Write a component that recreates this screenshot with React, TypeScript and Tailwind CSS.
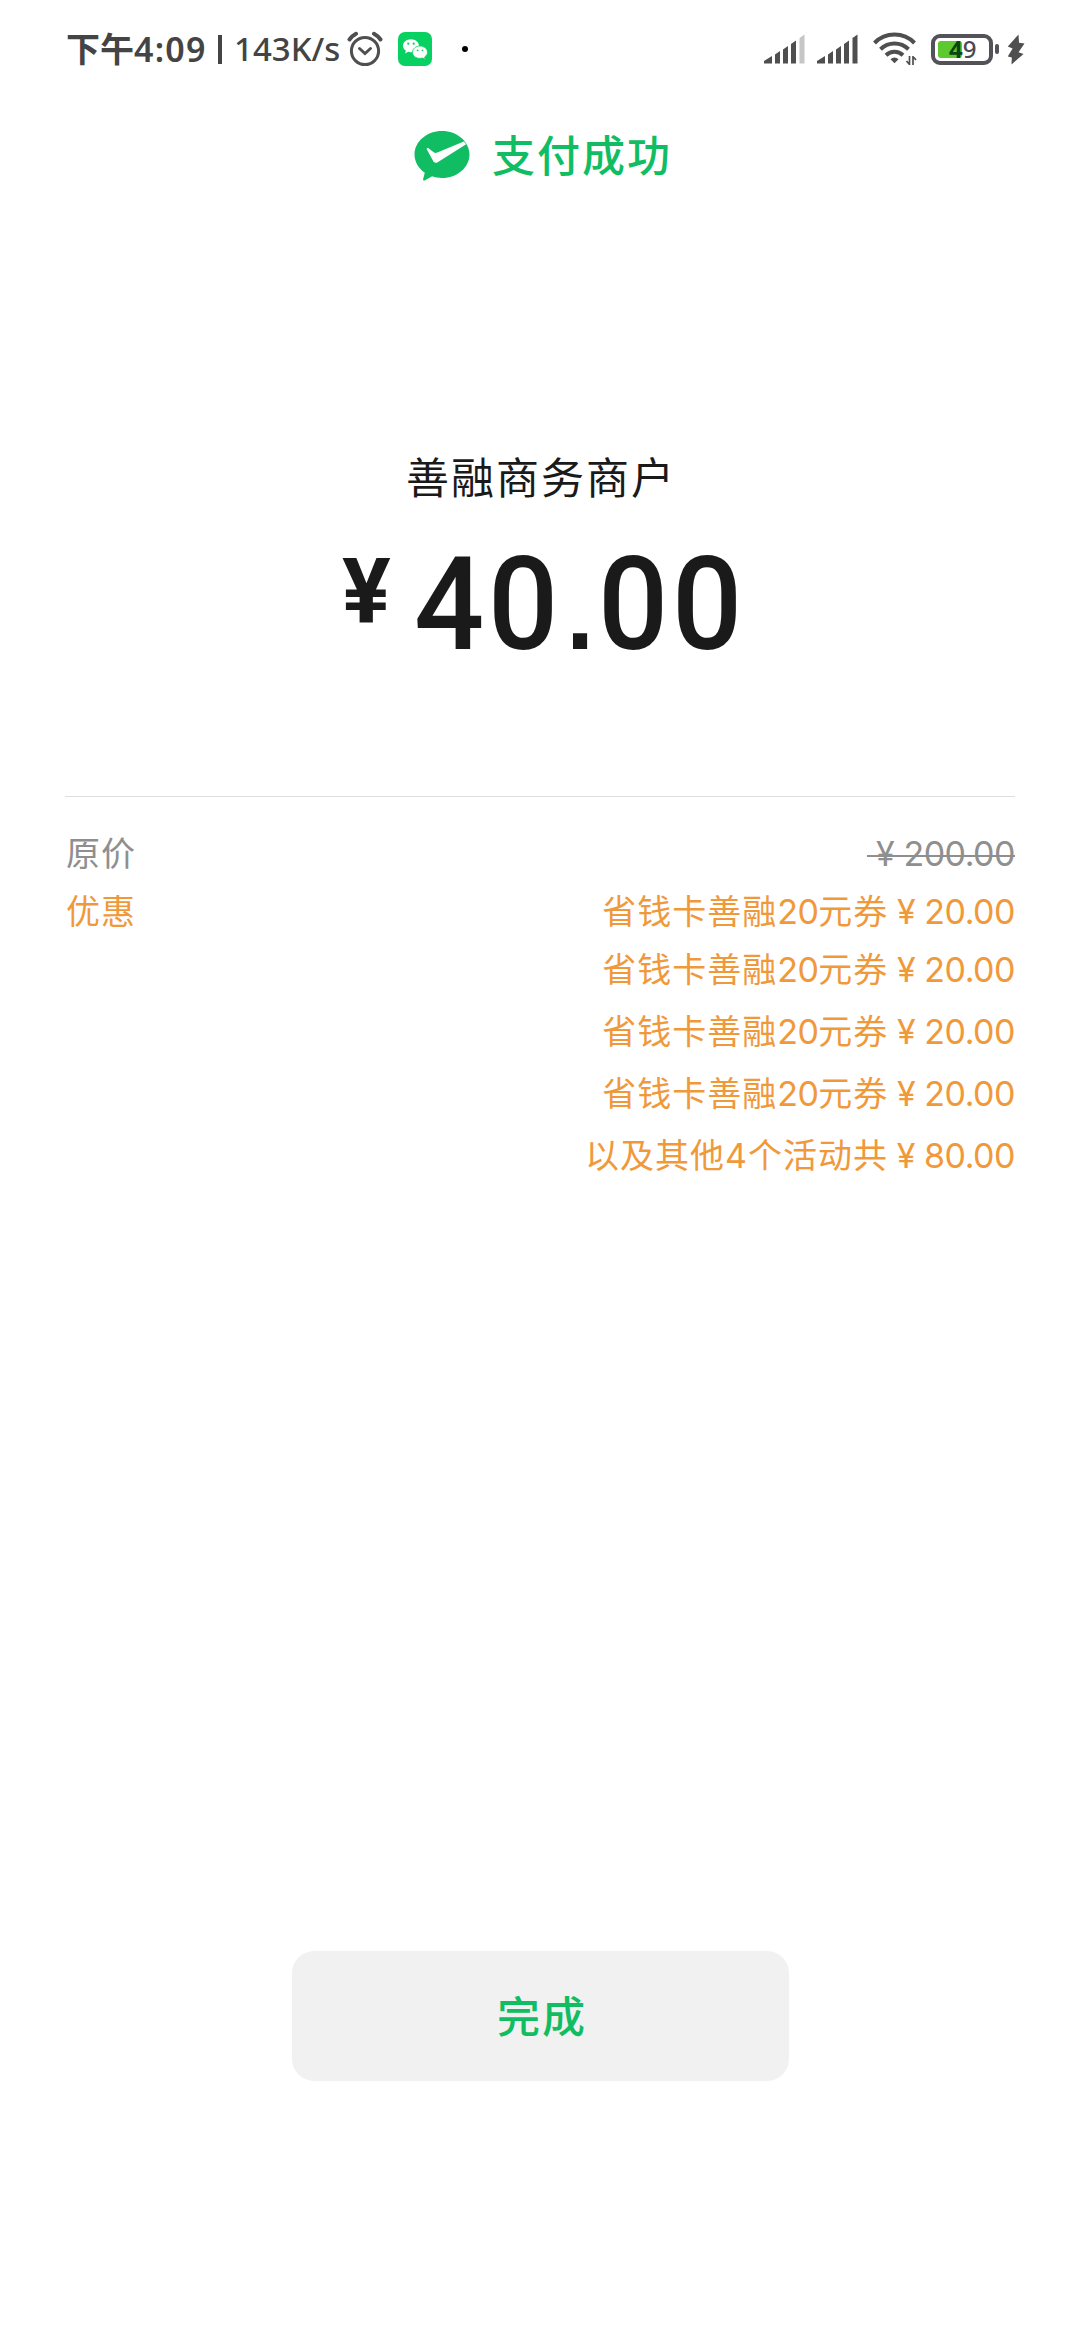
import type { ReactNode } from 'react';

type Discount = {
  id: number;
  name: ReactNode;
  amount: string;
};

function Num({ children }: { children: ReactNode }) {
  return <span className="tracking-[-0.5px]">{children}</span>;
}

function Price({ value }: { value: string }) {
  return (
    <>
      <span className="inline-block w-[36px] text-center text-[34px] tracking-normal">¥</span>
      <Num>{value}</Num>
    </>
  );
}

const couponName = (
  <>
    省钱卡善融<Num>20</Num>元券
  </>
);

const discounts: Discount[] = [
  { id: 1, name: couponName, amount: '20.00' },
  { id: 2, name: couponName, amount: '20.00' },
  { id: 3, name: couponName, amount: '20.00' },
  { id: 4, name: couponName, amount: '20.00' },
  { id: 5, name: '以及其他4个活动共', amount: '80.00' },
];

function AlarmIcon() {
  return (
    <svg className="h-[36px] w-[36px]" viewBox="0 0 36 36" fill="none" stroke="#4f4f4f">
      <circle cx="18" cy="20" r="13.6" strokeWidth="3" />
      <path d="M12.5 17.5l5.5 5 5.500-5" strokeWidth="3" strokeLinecap="round" />
      <path d="M2.500 8.500C4.200 6.200 6.400 4.200 9 2.800M33.500 8.500C31.800 6.200 29.600 4.200 27 2.800" strokeWidth="4" strokeLinecap="round" />
    </svg>
  );
}

function WechatBadge() {
  return (
    <svg className="h-[34px] w-[34px]" viewBox="0 0 34 34">
      <rect width="34" height="34" rx="7" fill="#07d160" />
      <path d="M13 7.2c-4.5 0-8 2.9-8 6.5 0 2 1.1 3.8 2.9 5l-.8 2.7 3-1.6c.9.3 1.9.4 2.9.4 4.4 0 8-2.9 8-6.5s-3.6-6.5-8-6.5z" fill="#fff" />
      <path d="M22 14c-4.2 0-7.5 2.7-7.5 6.2s3.3 6.2 7.5 6.2c.9 0 1.8-.1 2.6-.4l2.7 1.4-.7-2.4c1.8-1.2 2.9-2.9 2.9-4.8 0-3.5-3.4-6.2-7.5-6.2z" fill="#fff" stroke="#07d160" strokeWidth="0.8" />
      <g fill="#07d160">
        <circle cx="10.3" cy="11.7" r="1.1" />
        <circle cx="15.7" cy="11.7" r="1.1" />
        <circle cx="19.6" cy="18.3" r="0.9" />
        <circle cx="24.5" cy="18.3" r="0.9" />
      </g>
    </svg>
  );
}

function SignalIcon({ lastBar }: { lastBar: string }) {
  return (
    <svg className="h-[30px] w-[41px]" viewBox="0 0 41 30" fill="#4f4f4f">
      <path d="M0 27l8-5v7.5H0z" />
      <path d="M11 20.5l5-3.5v12.5h-5z" />
      <path d="M19 15.5l5-3.5v17.5h-5z" />
      <path d="M27 10l5-3.5v23h-5z" />
      <path d="M35.5 4l5-3.5v29h-5z" fill={lastBar} />
    </svg>
  );
}

function WifiIcon() {
  return (
    <svg className="h-[34px] w-[44px]" viewBox="0 0 44 34" fill="none" stroke="#4f4f4f">
      <path d="M1.5 11a28 28 0 0 1 40 0" strokeWidth="4" />
      <path d="M7.5 17.2a20 20 0 0 1 28 0" strokeWidth="4" />
      <path d="M13 23.2a12.5 12.5 0 0 1 17 0" strokeWidth="4" />
      <path d="M17.5 27.3a5.5 5.5 0 0 1 8 0l-4 4z" fill="#4f4f4f" stroke="none" />
      <path d="M36.5 24v9M36.5 32.5l-3-3.5M40 33v-9M40 24.5l3 3.5" strokeWidth="1.7" />
    </svg>
  );
}

function BatteryIcon() {
  return (
    <div className="flex items-center gap-[2px]">
      <div className="flex h-[31px] w-[62px] rounded-[9px] border-[4px] border-[#525258] p-[3px]">
        <div className="relative h-full w-[24px] rounded-[3px] bg-[#5bc92f]">
          <span className="absolute top-[-4px] left-[11px] font-['Noto_Sans',sans-serif] text-[24px] leading-[24px] whitespace-nowrap text-[#4a4a50]">
            <b className="font-bold text-[#0c4510]">4</b>
            <span className="font-medium">9</span>
          </span>
        </div>
      </div>
      <div className="h-[10px] w-[4px] rounded-[2px] bg-[#525258]" />
    </div>
  );
}

function BoltIcon() {
  return (
    <svg className="h-[31px] w-[19px]" viewBox="0 0 19 31" fill="#4f4f4f">
      <path d="M11.5.5L.8 12.5l4.800 2L.8 22.500l4 1L4.500 30.500 16.500 20l-5-1.700L17.500 9.500l-5.500-.8z" />
    </svg>
  );
}

function StatusBar() {
  return (
    <header className="flex h-[98px] items-center pr-[54px] pl-[66px] text-[#444]">
      <div className="flex items-center font-['Noto_Sans','Noto_Sans_CJK_SC',sans-serif] text-[33px] font-medium whitespace-nowrap">
        <span className="w-[142px] text-[34px]">
          <span className="font-bold">下午</span>
          <span className="font-semibold tracking-[1.2px]">4:09</span>
        </span>
        <span className="ml-[10px] h-[29px] w-[4px] bg-[#444]" />
        <span className="ml-[12px] w-[106px]">143K/s</span>
      </div>
      <div className="ml-[7px] flex items-center">
        <AlarmIcon />
        <div className="ml-[15px]">
          <WechatBadge />
        </div>
        <div className="ml-[30px] size-[6px] rounded-full bg-black" />
      </div>
      <div className="ml-auto flex items-center">
        <SignalIcon lastBar="#c6c6c6" />
        <div className="ml-[12px]">
          <SignalIcon lastBar="#4f4f4f" />
        </div>
        <div className="ml-[15px]">
          <WifiIcon />
        </div>
        <div className="ml-[14px]">
          <BatteryIcon />
        </div>
        <div className="ml-[8px]">
          <BoltIcon />
        </div>
      </div>
    </header>
  );
}

function PayLogo() {
  return (
    <svg className="h-[50px] w-[56px]" viewBox="42 44 168 151">
      <path
        d="M126 44c-46 0-83 32-83 71 0 22 12 42 31 55l-5 19c-1 4 2 6 6 4l21-12c9 3 19 5 30 5 46 0 83-32 83-71s-37-71-83-71z"
        fill="#10bd63"
      />
      <path d="M80 99c-1-3 3-5 6-2l16 12c3 2 6 2 10 0l80-33 7 8-86 54c-5 3-11 3-14-4z" fill="#fff" />
    </svg>
  );
}

export default function App() {
  return (
    <main className="flex h-[2340px] w-[1080px] flex-col bg-white font-['Inter','Noto_Sans_CJK_SC',sans-serif]">
      <StatusBar />

      <div className="mt-[28px] flex h-[60px] items-center pl-[414px]">
        <PayLogo />
        <h1 className="ml-[22px] text-[43px] leading-[60px] font-medium tracking-[2px] text-[#10bd63]">支付成功</h1>
      </div>

      <section className="mt-[262px] flex flex-col items-center">
        <h2 className="pl-[2px] text-[43px] leading-[60px] tracking-[2px] text-[#1a1a1a]">善融商务商户</h2>
        <div className="mt-[22px] flex h-[150px] w-[396px] items-start font-['Roboto',sans-serif] text-[#1a1a1a]">
          <span className="mt-[9px] w-[72px] shrink-0 text-[91px] leading-[106px] font-bold">¥</span>
          <span className="origin-left scale-x-[0.95] text-[130px] leading-[150px] font-medium tracking-[4px] whitespace-nowrap">
            40
            <span className="inline-block w-[38px] text-center font-['Liberation_Sans',sans-serif] text-[105px] leading-[100px] font-bold tracking-normal">
              .
            </span>
            00
          </span>
        </div>
      </section>

      <section className="mx-[65px] mt-[116px] border-t border-[#dedede] pt-[28px] text-[34px] tracking-[1px]">
        <div className="flex h-[58px] justify-between pl-px leading-[58px] text-[#8f8f8f]">
          <span>原价</span>
          <span className="relative">
            <Price value="200.00" />
            <span className="absolute inset-x-0 top-[30px] h-[2px] bg-[#8f8f8f]" />
          </span>
        </div>
        <div className="flex justify-between pl-px leading-[58px] text-[#f0993b]">
          <span>优惠</span>
          <ul className="text-right">
            {discounts.map((item) => (
              <li key={item.id} className="h-[62px] first:h-[58px]">
                {item.name}
                <Price value={item.amount} />
              </li>
            ))}
          </ul>
        </div>
      </section>

      <button
        type="button"
        className="mx-auto mt-auto mb-[259px] h-[130px] w-[497px] rounded-[22px] bg-[#f1f1f1] pt-[2px] pl-[4px] text-[43px] font-medium tracking-[2px] text-[#10bd63]"
      >
        完成
      </button>
    </main>
  );
}
